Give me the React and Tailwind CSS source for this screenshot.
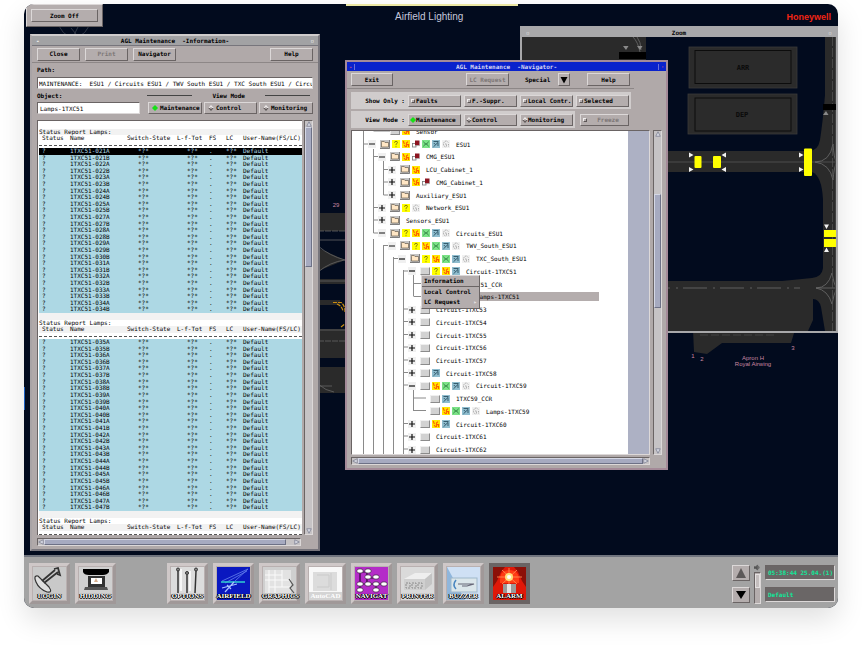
import React from "react";

const raised =
  "border border-t-[#dcd8d8] border-l-[#dcd8d8] border-b-[#6a6464] border-r-[#6a6464] bg-[#b4adad]";
const sunken =
  "border border-t-[#6a6464] border-l-[#6a6464] border-b-[#dcd8d8] border-r-[#dcd8d8]";
const tableCols =
  "grid grid-cols-[28px_57px_50px_32px_17px_17px_1fr] pl-[3px] leading-[6px] whitespace-nowrap";

const seq = (from, to, skip = []) => {
  const out = [];
  for (let n = from; n <= to; n++) {
    if (!skip.includes(n)) out.push(`1TXC51-0${n}A`, `1TXC51-0${n}B`);
  }
  return out;
};
const firstBlock = seq(21, 34, [26, 30]).flatMap((n) =>
  n === "1TXC51-031A" ? ["1TXC51-030B", n] : [n]
);
const secondBlock = seq(35, 47);

function Button({ children, className = "", dim = false }) {
  return (
    <button
      type="button"
      className={`${raised} flex h-[13px] shrink-0 items-center justify-center font-bold leading-none whitespace-nowrap ${
        dim ? "text-[#7d7777]" : "text-black"
      } ${className}`}
    >
      {children}
    </button>
  );
}

function Toggle({ type, name, children, className = "", on = false, dim = false, roomy = false }) {
  return (
    <label
      className={`${raised} flex h-3 shrink-0 items-center font-bold leading-none whitespace-nowrap ${
        roomy ? "gap-[3px] pl-1" : "gap-px pl-[2px]"
      } ${dim ? "text-[#7d7777]" : "text-black"} ${className}`}
    >
      <input
        type={type}
        name={name}
        defaultChecked={on}
        className={`size-1 shrink-0 appearance-none border border-t-[#f0eeee] border-l-[#f0eeee] border-b-[#5c5656] border-r-[#5c5656] bg-[#b4adad] checked:border-[#18e018] checked:bg-[#18e018] ${
          type === "radio" ? "rotate-45" : ""
        }`}
      />
      {children}
    </label>
  );
}

function Arrow({ d }) {
  return (
    <svg viewBox="0 0 8 8" className="size-[6px] shrink-0">
      <path d={d} fill="#d8dae4" stroke="#7b7e90" strokeWidth="1" />
    </svg>
  );
}

function VScroll({ children, className = "" }) {
  return (
    <div className={`${sunken} flex w-[9px] shrink-0 flex-col items-center bg-[#c6c3c5] ${className}`}>
      <Arrow d="M4 1 L7 7 H1 Z" />
      <div className="flex w-full flex-1 flex-col">{children}</div>
      <Arrow d="M4 7 L7 1 H1 Z" />
    </div>
  );
}

function HScroll({ thumb, className = "" }) {
  return (
    <div className={`${sunken} flex h-2 items-center bg-[#c6c3c5] ${className}`}>
      <Arrow d="M1 4 L7 1 V7 Z" />
      <div className="flex h-full flex-1">
        <div className={`border border-t-[#d4d7e4] border-l-[#d4d7e4] border-b-[#6d7186] border-r-[#6d7186] bg-[#a6aac0] ${thumb}`} />
      </div>
      <Arrow d="M7 4 L1 1 V7 Z" />
    </div>
  );
}

function Report({ rows, bodyClass = "", first = false, selected = -1 }) {
  return (
    <table className="block">
      <caption className={`block text-left leading-[6px] ${first ? "pt-[8px]" : "bg-[#f2f2f2] pt-[7px]"}`}>
        <div className={`h-[6px] ${first ? "bg-[#f2f2f2]" : "bg-white"}`}>Status Report Lamps:</div>
      </caption>
      <thead className="block">
        <tr className={`h-[7px] text-left ${tableCols} ${first ? "bg-white" : "bg-[#f2f2f2]"}`}>
          <th className="font-medium">Status</th>
          <th className="font-medium">Name</th>
          <th className="font-medium">Switch-State</th>
          <th className="font-medium">L-f-Tot</th>
          <th className="font-medium">FS</th>
          <th className="font-medium">LC</th>
          <th className="font-medium">User-Name(FS/LC)</th>
        </tr>
        <tr className="block h-[6px] pt-[3px]">
          <td className="block border-t border-dashed border-[#555]" />
        </tr>
      </thead>
      <tbody className={`grid auto-rows-fr bg-[#add8e4] ${bodyClass}`}>
        {rows.map((name, i) => (
          <tr key={name} className={`${tableCols} min-h-0 ${i === selected ? "bg-black text-[#b4dce8]" : "text-black"}`}>
            <td>?</td>
            <td>{name}</td>
            <td className="pl-[11px]">*?*</td>
            <td className="pl-[10px]">*?*</td>
            <td>.</td>
            <td>*?*</td>
            <td>Default</td>
          </tr>
        ))}
      </tbody>
    </table>
  );
}

function InformationWindow() {
  return (
    <section className="relative mt-[30px] mb-1 ml-[6px] w-[290px] border-2 border-t-[#cfcccc] border-l-[#a9a4a6] border-b-[#77757c] border-r-[#77757c] bg-[#b0a9a9]">
      <header className="flex h-[10px] items-center justify-between border-b border-[#77757c] bg-[#a2a2a4] px-1 font-bold leading-none">
        <span className="text-white">-</span>
        <h2 className="whitespace-pre">{"AGL Maintenance  -Information-"}</h2>
        <span className="text-white">▫</span>
      </header>
      <div className="flex h-[17px] items-center border-b border-[#8d8787] px-[5px]">
        <Button className="w-[43px]">Close</Button>
        <Button className="ml-[5px] w-[43px]" dim>Print</Button>
        <Button className="ml-[5px] w-[43px]">Navigator</Button>
        <Button className="ml-auto w-[43px]">Help</Button>
      </div>
      <div className="flex flex-col px-[5px]">
        <label htmlFor="path" className="flex h-[14px] items-center font-bold leading-none">Path:</label>
        <input
          id="path"
          readOnly
          defaultValue="MAINTENANCE:  ESU1 / Circuits_ESU1 / TWV_South_ESU1 / TXC_South_ESU1 / Circu"
          className={`${sunken} h-3 w-full bg-white pl-px font-medium leading-[10px]`}
        />
        <div className="flex h-[13px] items-center font-bold leading-none">
          <label htmlFor="object">Object:</label>
          <span className="ml-[85px] h-px flex-1 bg-[#444]" />
          <span className="mx-5">View Mode</span>
          <span className="mr-[3px] h-px flex-1 bg-[#444]" />
        </div>
        <div className="flex">
          <input id="object" readOnly defaultValue="Lamps-1TXC51" className={`${sunken} h-3 w-[103px] bg-white px-[2px] font-medium leading-[10px]`} />
          <div className="ml-auto flex gap-[2px]">
            <Toggle type="radio" name="info-mode" on roomy className="w-[54px]">Maintenance</Toggle>
            <Toggle type="radio" name="info-mode" roomy className="w-[53px]">Control</Toggle>
            <Toggle type="radio" name="info-mode" roomy className="w-[54px]">Monitoring</Toggle>
          </div>
        </div>
        <div className="mt-[6px] flex gap-[2px]">
          <div className="h-[415px] min-w-0 flex-1 overflow-hidden border-t border-l border-[#6a6464] bg-white pl-px">
            <Report rows={firstBlock} first selected={0} bodyClass="h-[165px]" />
            <Report rows={secondBlock} bodyClass="h-[172px]" />
            <Report rows={[]} />
          </div>
          <VScroll>
            <div className="h-[140px] border border-t-[#d4d7e4] border-l-[#d4d7e4] border-b-[#6d7186] border-r-[#6d7186] bg-[#a6aac0]" />
          </VScroll>
        </div>
        <HScroll className="mt-[3px] mr-3 mb-[3px]" thumb="w-[242px]" />
      </div>
    </section>
  );
}

/* Small status glyphs shown between the folder and the node name. */
function Glyph({ kind }) {
  const common = "mr-[2px] size-2 shrink-0";
  if (kind === "q")
    return (
      <svg viewBox="0 0 8 8" className={common}>
        <rect width="8" height="8" fill="#ffff00" />
        <path d="M2.6 2.8 Q2.6 1.3 4 1.3 Q5.5 1.3 5.4 2.7 Q5.2 3.6 4 4.3 V5.2 M4 6.2 V7.2" stroke="#857f10" strokeWidth="1" fill="none" />
      </svg>
    );
  if (kind === "y")
    return (
      <svg viewBox="0 0 8 8" className={common}>
        <rect width="8" height="8" fill="#ffe800" />
        <path d="M1.2 1 L2.4 4 M2 5 L3.6 7 M4.4 7 V3 L6 1.6 M5 4.6 H6.6 V7" stroke="#ff5a00" strokeWidth="1.1" fill="none" />
      </svg>
    );
  if (kind === "r")
    return (
      <svg viewBox="0 0 8 8" className={common}>
        <rect x="0.5" y="3.5" width="3.5" height="3.5" fill="#fff" stroke="#777" strokeWidth="0.8" />
        <rect x="3" y="0.5" width="4.5" height="4.8" fill="#8d1420" />
        <path d="M3 5.6 H7.8 V1" stroke="#999" strokeWidth="0.6" fill="none" />
      </svg>
    );
  if (kind === "g")
    return (
      <svg viewBox="0 0 8 8" className={common}>
        <rect width="8" height="8" fill="#7be287" />
        <path d="M1 1.5 L7 6.5 M7 1.5 L1 6.5 M2 4 H6" stroke="#3f9450" strokeWidth="0.9" />
      </svg>
    );
  if (kind === "b")
    return (
      <svg viewBox="0 0 8 8" className={common}>
        <rect width="8" height="8" fill="#8fbdcf" />
        <path d="M1.5 1.5 H6.5 M1.5 6.8 L6 2.4 V6 M1.8 3 L3.4 4.6" stroke="#2a5062" strokeWidth="0.9" fill="none" />
      </svg>
    );
  return (
    <svg viewBox="0 0 8 8" className={common}>
      <rect width="8" height="8" fill="#f1f1f1" />
      <path d="M4.500 1 L6.500 2.500 M4 1 Q1.500 2 1.500 4 Q1.500 6.500 4 7 M3 4 H4.500 V7 M6.500 4 V6.500" fill="none" stroke="#999" strokeWidth="0.8" strokeDasharray="1.4 0.6" />
    </svg>
  );
}

function Folder() {
  return (
    <svg viewBox="0 0 10 9" className="mr-[2px] h-[9px] w-[10px] shrink-0">
      <rect width="10" height="9" fill="#c4c4c4" />
      <path d="M0 8.500 H9.500 V0" stroke="#7e7e7e" fill="none" />
      <path d="M1.500 2.500 V1.500 H4.200 L5 2.500 H8.500 V7 H1.500 Z" fill="#ffe6c4" stroke="#6a6050" strokeWidth="0.700" />
    </svg>
  );
}

function Box() {
  return <span className="mr-[2px] h-2 w-[10px] shrink-0 border border-t-[#efefef] border-l-[#efefef] border-b-[#8b8b8b] border-r-[#8b8b8b] bg-[#d2d2d2]" />;
}

const indent = ["pl-[16px]", "pl-[26px]", "pl-[36px]", "pl-[46px]", "pl-[56px]", "pl-[66px]"];

/* [level, expander, holder, glyphs, name] */
const tree = [
  [1, "", "box", "y", "Sensor"],
  [0, "-", "folder", "qyrgbd", "ESU1"],
  [1, "-", "folder", "yr", "CMG_ESU1"],
  [2, "+", "folder", "y", "LCU_Cabinet_1"],
  [2, "+", "folder", "yr", "CMG_Cabinet_1"],
  [2, "+", "folder", "", "Auxiliary_ESU1"],
  [1, "+", "folder", "qd", "Network_ESU1"],
  [1, "+", "folder", "", "Sensors_ESU1"],
  [1, "-", "folder", "qygbd", "Circuits_ESU1"],
  [2, "-", "folder", "qygbd", "TWV_South_ESU1"],
  [3, "-", "folder", "qygbd", "TXC_South_ESU1"],
  [4, "-", "box", "qyb", "Circuit-1TXC51"],
  [5, "", "box", "yb", "1TXC51_CCR"],
  [5, "", "box", "ygb", "Lamps-1TXC51"],
  [4, "+", "box", "", "Circuit-1TXC53"],
  [4, "+", "box", "", "Circuit-1TXC54"],
  [4, "+", "box", "", "Circuit-1TXC55"],
  [4, "+", "box", "", "Circuit-1TXC56"],
  [4, "+", "box", "", "Circuit-1TXC57"],
  [4, "+", "box", "b", "Circuit-1TXC58"],
  [4, "-", "box", "ygbd", "Circuit-1TXC59"],
  [5, "", "box", "b", "1TXC59_CCR"],
  [5, "", "box", "ygbd", "Lamps-1TXC59"],
  [4, "+", "box", "yb", "Circuit-1TXC60"],
  [4, "+", "box", "", "Circuit-1TXC61"],
  [4, "+", "box", "", "Circuit-1TXC62"],
];

const treeLines =
  "M11.5 0V330 M21.5 24V108 M21.5 114V330 M31.5 36V70 M31.5 120V330 M41.5 132V330 M51.5 145V330 M61.5 150V171 M61.5 265V286" +
  " M11.5 19H18 M21.5 6H38 M21.5 31.5H28 M31.5 44.5H38 M31.5 57H38 M31.5 70H38 M21.5 82.5H28 M21.5 95H28 M21.5 108H28 M31.5 120.5H38 M41.5 133.5H48 M51.5 146H58" +
  " M61.5 158.5H74 M61.5 171.5H74 M51.5 184H58 M51.5 196.5H58 M51.5 209.5H58 M51.5 222H58 M51.5 235H58 M51.5 247.5H58 M51.5 260H58 M61.5 273H74 M61.5 285.5H74 M51.5 298.5H58 M51.5 311H58 M51.5 324H58";

function NavigatorTree() {
  return (
    <div className="relative -mt-[6px] h-[331px]">
      <svg viewBox="0 0 200 331" className="absolute top-0 left-0 h-[331px] w-[200px]">
        <path d={treeLines} stroke="#8a8a8a" strokeWidth="1" fill="none" />
      </svg>
      <ul className="relative grid h-full auto-rows-fr">
        {tree.map(([level, exp, holder, glyphs, name]) => {
          const active = name === "Lamps-1TXC51";
          return (
            <li key={name} className={`flex min-h-0 items-center ${indent[level]}`}>
              <span className="flex w-3 shrink-0 justify-start">
                {exp && (
                  <svg viewBox="0 0 8 8" className="size-2">
                    <rect width="8" height="8" fill="#f0f0f0" />
                    <path d={exp === "+" ? "M1 4H7M4 1V7" : "M1 4H7"} stroke="#111" strokeWidth="1.2" />
                  </svg>
                )}
              </span>
              {holder === "folder" ? <Folder /> : <Box />}
              {glyphs.split("").map((k) => (
                <Glyph key={k} kind={k} />
              ))}
              <span className={`leading-[9px] whitespace-nowrap ${active ? "w-[127px] bg-[#b4adad] pl-1" : "ml-1"}`}>{name}</span>
            </li>
          );
        })}
      </ul>
    </div>
  );
}

function NavigatorWindow() {
  return (
    <section className="absolute top-14 left-[321px] w-[323px] border-2 border-[#a48a98] bg-[#b0a9a9]">
      <header className="flex h-[9px] items-center justify-between bg-[#0a22cc] font-bold leading-none text-[#d4d4f4]">
        <span className="w-2 border-r border-[#6a70d8] text-center text-[#c05080]">-</span>
        <h2 className="whitespace-pre">{"AGL Maintenance  -Navigator-"}</h2>
        <span className="w-2 border-l border-[#6a70d8] text-center text-[#c05080]">·</span>
      </header>
      <div className="mr-8 flex h-[18px] items-center border-b border-[#8d8787] px-1 font-bold">
        <Button className="w-[42px]">Exit</Button>
        <Button className="ml-[73px] w-[43px]" dim>LC Request</Button>
        <span className="ml-[16px] leading-none">Special</span>
        <Button className="ml-2 w-3">
          <svg viewBox="0 0 8 8" className="size-2">
            <path d="M0.5 1 H7.5 L4 7.5 Z" fill="#000" />
          </svg>
        </Button>
        <Button className="ml-auto w-[43px]">Help</Button>
      </div>
      <div className="mx-1 mt-[3px] flex h-[17px] items-center">
        <div className="flex h-full items-center gap-[3px] bg-[#d0cccc] pr-[2px]">
          <span className="w-[54px] text-right font-bold leading-none">Show Only :</span>
          <Toggle type="checkbox" className="w-[53px]">Faults</Toggle>
          <Toggle type="checkbox" className="w-[53px]">F.-Suppr.</Toggle>
          <Toggle type="checkbox" className="w-[53px]">Local Contr.</Toggle>
          <Toggle type="checkbox" className="w-[53px]">Selected</Toggle>
        </div>
      </div>
      <div className="mx-1 mt-[2px] flex h-[17px] items-center gap-[5px]">
        <div className="flex h-full items-center gap-[3px] bg-[#d0cccc] pr-[2px]">
          <span className="w-[54px] text-right font-bold leading-none">View Mode :</span>
          <Toggle type="radio" name="nav-mode" on className="w-[53px]">Maintenance</Toggle>
          <Toggle type="radio" name="nav-mode" className="w-[53px]">Control</Toggle>
          <Toggle type="radio" name="nav-mode" className="w-[53px]">Monitoring</Toggle>
        </div>
        <Toggle type="checkbox" className="w-[49px]" dim>
          <span className="flex-1 text-center">Freeze</span>
        </Toggle>
      </div>
      <div className="mx-1 mt-[2px] flex gap-[3px]">
        <div className={`${sunken} flex h-[325px] flex-1 overflow-hidden bg-[#adb1c4]`}>
          <div className="w-[276px] bg-white">
            <NavigatorTree />
          </div>
        </div>
        <VScroll>
          <div className="mt-[57px] h-[114px] border border-t-[#d4d7e4] border-l-[#d4d7e4] border-b-[#6d7186] border-r-[#6d7186] bg-[#a6aac0]" />
        </VScroll>
      </div>
      <HScroll className="mr-4 mt-[2px] mb-[3px] ml-1" thumb="w-full" />
      <div className={`${raised} absolute top-[213px] left-[74px] grid w-[59px] font-bold leading-[10px] whitespace-nowrap`}>
        <button type="button" className="border-b border-[#6a6464] px-[2px] text-left">Information</button>
        <button type="button" className="px-[2px] text-left">Local Control</button>
        <button type="button" className="flex justify-between px-[2px] pb-px text-left">
          LC Request <span className="text-[#e4e0e0]">▸</span>
        </button>
      </div>
    </section>
  );
}

function ZoomWindow() {
  return (
    <section className="absolute top-[22px] right-0 left-[496px] border-2 border-[#a8a8aa] bg-[#2a2a2a]">
      <header className="relative flex h-[9px] items-center justify-between bg-[#a8a8aa] px-1 font-bold leading-none">
        <span className="text-[#e4e4e4]">▫</span>
        <h2>Zoom</h2>
        <span className="text-[#e4e4e4]">▫</span>
      </header>
      <svg viewBox="522 37 314 294" className="block w-full">
        <rect x="522" y="37" width="314" height="294" fill="#2a2a2a" />
        <g fill="#020b1e">
          <path d="M646 37 H825 V95 Q823 120 820 140 Q818 151 809 151 H646 Z" />
          <path d="M646 172 H812 Q822 176 823 200 V268 Q822 277 812 278 L782 281 H646 Z" />
          <path d="M813 299 Q819 299 821 307 L825 331 H808 L813 320 Z" />
        </g>
        <g fill="#2b2b2b" stroke="#3a3a3a" strokeWidth="0.8">
          <rect x="689" y="47" width="108" height="41" />
          <rect x="688" y="94" width="109" height="40" />
        </g>
        <g fill="none" stroke="#0c0c0c" strokeWidth="1">
          <rect x="695" y="50.500" width="96" height="33" />
          <rect x="695" y="98" width="96" height="33" />
        </g>
        <g fill="#0a0a0a" fontSize="7" fontWeight="bold" textAnchor="middle">
          <text x="743" y="70">ARR</text>
          <text x="742" y="117">DEP</text>
        </g>
        <g fill="none" stroke="#6c6c6c" strokeWidth="0.8">
          <path d="M646 162 H836" stroke="#555" />
          <path d="M633 37 Q638 42 640 52 M637 37 Q641 42 641 50" />
          <path d="M815 162 Q830 162 833 144 Q834 158 836 161 M815 162 Q830 164 833 180 Q834 168 836 164" />
          <path d="M816 288 Q828 288 832 273 Q834 284 836 287 M816 288 Q828 290 832 304 Q834 294 836 290" />
          <path d="M646 288 H800" strokeDasharray="24 6 2 5" />
          <path d="M816 288 H836" />
          <path d="M832.500 37 V331" stroke="#505050" strokeDasharray="9 2" />
          <path d="M835.500 37 V331" stroke="#444" />
        </g>
        <g fill="#000">
          <rect x="619" y="52" width="27" height="7" />
          <rect x="823" y="104" width="13" height="6" />
        </g>
        <path d="M623 46 H628.500 L626 50 Z M637 46 H642.500 L640 50 Z M823 115 H828.500 L826 111 Z" fill="#8a8a8a" />
        <g fill="#ffff00">
          <rect x="694.500" y="156" width="7" height="12" rx="1" />
          <rect x="713" y="156" width="8" height="12" rx="1" />
          <rect x="804" y="148.500" width="8" height="27.500" rx="1" />
          <rect x="824" y="230" width="12" height="7" />
          <rect x="824" y="239" width="12" height="8" />
        </g>
        <path
          d="M689 152.500 L693.500 155 L689 157.500 Z M689 167 L693.500 169.500 L689 172 Z M726 152.500 L721.500 155 L726 157.500 Z M726 167 L721.500 169.500 L726 172 Z M799 152.500 L803.500 155 L799 157.500 Z M799 167 L803.500 169.500 L799 172 Z M824 224.500 H829 L826.500 229 Z M824 252 H829 L826.500 247.500 Z"
          fill="#f2f2f2"
        />
      </svg>
    </section>
  );
}

function DesktopMap() {
  return (
    <svg viewBox="24 4 814 551" preserveAspectRatio="xMinYMin slice" className="absolute inset-0 h-full w-full">
      <g fill="#2a2a2a">
        <rect x="318" y="213" width="30" height="18" />
        <path d="M318 248 L345 260 L318 271 Z" />
        <rect x="318" y="279" width="30" height="5" />
        <rect x="318" y="300" width="22" height="5" />
        <rect x="318" y="329" width="30" height="29" />
        <rect x="318" y="367" width="30" height="26" />
        <path d="M693 330 H795 L791 343 H722 L707 354 L694 352 Z" />
      </g>
      <g fill="none" stroke="#666" strokeWidth="0.8">
        <path d="M318 231H346 M318 341H346" strokeDasharray="6 1" />
        <path d="M318 240H346 M318 281H346 M318 330H346" />
        <path d="M318 246 Q330 256 345 260 Q330 262 318 272" />
        <path d="M318 386 H332 M318 384 Q326 391 334 392" />
        <path d="M700 335 H775" stroke="#4a4a4a" strokeDasharray="8 3" />
        <circle cx="74" cy="22" r="15" stroke="#3c4250" />
        <path d="M71 28 L76 34 M78 27 L74 35" stroke="#3c4250" />
      </g>
      <path d="M333 302.500 H341 Q345 305 345 312 M337 304 Q342 306 343 311 M341 327 L345 324" stroke="#c98c10" strokeWidth="1.200" strokeDasharray="4 1" fill="none" />
      <rect x="24" y="387" width="1" height="23" fill="#1c5fc0" />
      <rect x="346" y="4" width="172" height="2" fill="#ece8a4" />
      <g fill="#c987a2" fontSize="6" textAnchor="middle" className="font-[Liberation_Sans,sans-serif]">
        <text x="336" y="207">29</text>
        <text x="693" y="358">1</text>
        <text x="702" y="361">2</text>
        <text x="793" y="350">3</text>
        <text x="753" y="360">Apron H</text>
        <text x="753" y="366">Royal Airwing</text>
      </g>
    </svg>
  );
}

function TaskArt({ kind }) {
  switch (kind) {
    case "LOGIN":
      return (
        <g fill="none" stroke="#333" strokeWidth="1.200">
          <rect width="33" height="33" fill="#c9c9c9" stroke="none" />
          <path d="M3 15 Q0 8 5 9 L16 20 Q20 26 14 25 Q6 22 3 15 Z" fill="#dedede" />
          <path d="M9 14 L22 3 M11 16 L25 5 M21 2 L25 1 L27 8 L24 7" strokeWidth="1.800" />
        </g>
      );
    case "HIDDING":
      return (
        <g>
          <rect width="33" height="33" fill="#d0d0d0" />
          <path d="M4 2 H30 V5 Q28 8 24 8 H10 Q5 8 4 5 Z" fill="#000" />
          <path d="M9 9 H26 V20 H9 Z" fill="#333" />
          <path d="M12 11 H23 V17 H12 Z" fill="#fff" />
          <path d="M6 20 H28 L29 23 H5 Z" fill="#555" />
          <path d="M15 15 L17 11 L19 15 Z" fill="#d8b090" />
        </g>
      );
    case "OPTIONS":
      return (
        <g stroke="#333" fill="#888">
          <rect width="33" height="33" fill="#dcdcdc" stroke="none" />
          <path d="M7 4 V26 M16 8 V26 M25 4 L24 26" strokeWidth="1.500" />
          <circle cx="7" cy="2.500" r="1.500" />
          <circle cx="16" cy="6" r="1.500" />
          <circle cx="25" cy="2.500" r="1.500" />
          <path d="M10 2 V24 M19 4 V24" stroke="#fff" strokeWidth="1.500" />
        </g>
      );
    case "AIRFIELD":
      return (
        <g fill="none">
          <rect width="33" height="33" fill="#0a18c0" />
          <path d="M5 14 L31 2 M8 16 L30 4 M18 14 L31 2" stroke="#5c78e8" strokeWidth="0.900" />
          <path d="M4 15 H28" stroke="#30d0d0" strokeWidth="1.300" />
          <path d="M5 21 L20 17 M8 25 L17 15 M10 18 L14 22" stroke="#a8c0ff" strokeWidth="1.200" />
        </g>
      );
    case "GRAPHICS":
      return (
        <g>
          <rect width="33" height="33" fill="#cfcfcf" />
          <path d="M2 3 H28 V26 H2 Z" fill="#e2e2e2" />
          <path d="M6 3 V26 M12 3 V26 M19 3 V20 M2 8 H19 M2 13 H28 M6 20 H28" stroke="#fafafa" />
          <path d="M26 12 L30 18 L27 21 L31 26" stroke="#555" strokeWidth="1.200" fill="none" />
        </g>
      );
    case "AutoCAD":
      return (
        <g>
          <rect width="33" height="33" fill="#f8f8f8" />
          <path d="M4 5 H28 V24 H4 Z" fill="#dcdcdc" />
          <path d="M8 8 H20 V20 H8 M22 6 V23" stroke="#cacaca" fill="none" />
          <rect y="25" width="33" height="8" fill="#d4d4d4" />
        </g>
      );
    case "NAVIGAT":
      return (
        <g>
          <rect width="33" height="33" fill="#b42cc8" />
          <path d="M5 5 H12 V17 M5 5 V23 M12 11 H20 M5 17 H28 M21 17 V23" stroke="#300838" strokeWidth="1.200" fill="none" />
          {[[5, 4], [13, 4], [13, 10], [21, 10], [5, 17], [13, 17], [21, 17], [29, 17], [5, 23], [21, 23]].map(([x, y]) => (
            <ellipse key={`${x}-${y}`} cx={x} cy={y} rx="3.300" ry="2.200" fill="#fff" stroke="#300838" strokeWidth="0.700" />
          ))}
        </g>
      );
    case "PRINTER":
      return (
        <g>
          <rect width="33" height="33" fill="#dadada" />
          <path d="M3 12 L14 6 H31 L24 12 Z" fill="#eee" />
          <path d="M3 12 H24 V23 H3 Z" fill="#cfcfcf" />
          <path d="M24 12 L31 6 V17 L24 23 Z" fill="#c4c4c4" />
          <path d="M5 16 H9 V21 H5 Z M11 16 H15 V21 H11 Z M17 16 H21 V21 H17 Z" fill="none" stroke="#8d8d8d" strokeDasharray="2 1" />
        </g>
      );
    case "BUZZER":
      return (
        <g>
          <rect width="33" height="33" fill="#cfe0f4" />
          <path d="M0 0 L18 33 H0 Z" fill="#8fb6dc" />
          <rect x="4" y="11" width="26" height="14" fill="#dbe6ea" stroke="#9fb7ca" />
          <path d="M9 13 Q5 18 9 22" stroke="#4a86c0" strokeWidth="1.600" fill="none" />
          <path d="M11 17 H27 L20 19 H15" stroke="#667" strokeWidth="1.200" fill="none" />
        </g>
      );
    default:
      return (
        <g>
          <rect width="33" height="33" fill="#e01808" />
          <path d="M0 0 H12 L8 5 L4 14 L0 20 Z M33 0 H21 L25 5 L29 14 L33 20 Z" fill="#8c1008" />
          <path d="M7 16 Q6 3 16 3 Q27 3 26 16 Z" fill="#ff3c14" />
          <path d="M16 1 V19 M4 10 H29 M9 3 L24 17 M24 3 L9 17" stroke="#ff8a50" strokeWidth="0.900" />
          <circle cx="16" cy="10" r="4" fill="#ffe07a" />
          <circle cx="16" cy="10" r="2" fill="#fff" />
          <path d="M10 17 H23 V26 H10 Z" fill="#9a9a9a" />
          <path d="M14 17 H18 V26 H14 Z" fill="#e6e6e6" />
        </g>
      );
  }
}

function TaskButton({ label, active = false, pale = false }) {
  return (
    <button
      type="button"
      className={`relative size-[41px] shrink-0 border-[3px] p-px ${
        active
          ? "border-[#6a6464] bg-[#6a6464]"
          : "border-t-[#cfc8c8] border-l-[#cfc8c8] border-b-[#a09898] border-r-[#a09898] bg-[#b9b0b0]"
      }`}
    >
      <svg viewBox="0 0 33 33" className="block size-full">
        <TaskArt kind={label} />
      </svg>
      <span
        className={`absolute inset-x-0 bottom-px text-center font-[Liberation_Serif,serif] text-[7px] leading-[7px] font-bold text-white ${
          pale ? "" : "[text-shadow:0_0_1px_#000,1px_0_0_#000,-1px_0_0_#000,0_1px_0_#000]"
        }`}
      >
        {label}
      </span>
    </button>
  );
}

function Taskbar() {
  return (
    <footer className="flex h-[53px] items-center border-t-2 border-[#70747e] bg-[#a3a3a3] pt-[2px] pr-[3px] pl-[5px]">
      <div className="flex gap-[5px]">
        <TaskButton label="LOGIN" />
        <TaskButton label="HIDDING" />
        <span className="w-[41px]" />
        <TaskButton label="OPTIONS" />
        <TaskButton label="AIRFIELD" />
        <TaskButton label="GRAPHICS" />
        <TaskButton label="AutoCAD" pale />
        <TaskButton label="NAVIGAT" />
        <TaskButton label="PRINTER" />
        <TaskButton label="BUZZER" />
        <TaskButton label="ALARM" active />
      </div>
      <div className="ml-auto flex items-center gap-1">
        <div className="flex flex-col gap-[6px]">
          <button type="button" aria-label="Previous" className={`${raised} flex h-4 w-[18px] items-center justify-center`}>
            <svg viewBox="0 0 10 10" className="size-[10px]"><path d="M5 0 L10 10 H0 Z" fill="#5c5858" /></svg>
          </button>
          <button type="button" aria-label="Next" className={`${raised} flex h-4 w-[18px] items-center justify-center`}>
            <svg viewBox="0 0 10 10" className="size-[10px]"><path d="M5 9 L10 1 H0 Z" fill="#000" /></svg>
          </button>
        </div>
        <div className="flex flex-col items-center gap-px">
          <svg viewBox="0 0 8 8" className="size-[7px]">
            <path d="M0 3 H2 L4 1 V7 L2 5 H0 Z M5 2 Q7 4 5 6" fill="#555" stroke="#555" strokeWidth="0.700" />
          </svg>
          <input
            type="range"
            aria-label="Volume"
            defaultValue={10}
            className={`${sunken} h-8 w-[7px] appearance-none bg-[#b4adad] [writing-mode:vertical-lr] [&::-webkit-slider-thumb]:h-[14px] [&::-webkit-slider-thumb]:w-[5px] [&::-webkit-slider-thumb]:appearance-none [&::-webkit-slider-thumb]:border [&::-webkit-slider-thumb]:border-[#e4e0e0] [&::-webkit-slider-thumb]:bg-[#c4bebe]`}
          />
        </div>
        <div className="flex flex-col gap-[7px] font-bold text-[#10e89a]">
          <output className={`${sunken} flex h-[15px] w-[70px] items-center bg-[#6a6666] pl-[2px] leading-none whitespace-nowrap`}>
            05:38:44 25.04.(1)
          </output>
          <output className={`${sunken} flex h-[15px] w-[70px] items-center bg-[#6a6666] pl-[2px] leading-none whitespace-nowrap`}>
            Default
          </output>
        </div>
      </div>
    </footer>
  );
}

export default function App() {
  return (
    <div className="px-6 pt-1 pb-11 bg-white font-['DejaVu_Sans_Mono','Liberation_Mono',monospace] text-[6px] text-black">
      <div className="overflow-hidden rounded-[10px] bg-[#020b1e] shadow-[0_12px_28px_rgba(0,0,0,0.12)]">
        <main className="relative flow-root">
          <DesktopMap />
          <h1 className="absolute top-[7px] left-[371px] font-[Liberation_Sans,sans-serif] text-[10px] leading-3 whitespace-nowrap text-[#c4c6dc]">
            Airfield Lighting
          </h1>
          <span className="absolute top-[7px] right-[7px] font-[Liberation_Sans,sans-serif] text-[9px] leading-3 font-bold text-[#f02414]">
            Honeywell
          </span>
          <div className={`${raised} absolute top-0 left-[2px] p-1`}>
            <Button className="w-[67px]">Zoom Off</Button>
          </div>
          <InformationWindow />
          <ZoomWindow />
          <NavigatorWindow />
        </main>
        <Taskbar />
      </div>
    </div>
  );
}
